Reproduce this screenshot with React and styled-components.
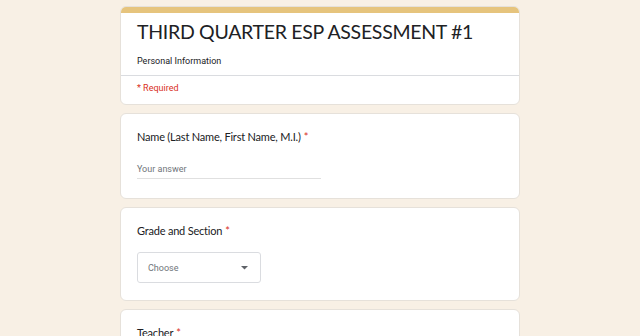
import React from "react";
import styled, { createGlobalStyle } from "styled-components";

const Global = createGlobalStyle`
  html, body { margin: 0; padding: 0; }
  body { background: #f8f0e5; font-family: Roboto, "Noto Sans", sans-serif; }
`;

const Page = styled.div`
  width: 400px;
  margin: 0 auto;
  padding-top: 6px;
  display: flex;
  flex-direction: column;
  gap: 8px;
`;

const Card = styled.section`
  background: #fff;
  border: 1px solid #e6e1da;
  border-radius: 6px;
  overflow: hidden;
  box-sizing: border-box;
`;

const TopBar = styled.div`
  height: 6px;
  background: #e6c47d;
`;

const Head = styled.div`
  padding: 6px 16px 8px;
`;

const Title = styled.h1`
  margin: 0;
  font-family: Lato, "Open Sans", sans-serif;
  font-weight: 400;
  font-size: 19.5px;
  letter-spacing: -0.3px;
  line-height: 26px;
  color: #202124;
  white-space: nowrap;
`;

const Desc = styled.div`
  margin-top: 10px;
  font-size: 9px;
  line-height: 12px;
  color: #202124;
`;

const Divider = styled.div`
  height: 1px;
  background: #dadce0;
`;

const Required = styled.div`
  padding: 6px 16px 10px;
  font-size: 9px;
  line-height: 12px;
  color: #d93025;
`;

const Question = styled.div`
  padding: ${(p) => p.$pad || "15px 16px 18px"};
`;

const Label = styled.div`
  font-family: Lato, "Open Sans", sans-serif;
  font-size: 11px;
  letter-spacing: -0.2px;
  line-height: 15px;
  color: #202124;
`;

const Star = styled.span`
  color: #d93025;
  margin-left: 3px;
`;

const TextInput = styled.div`
  margin-top: 19px;
  width: 184px;
  padding-bottom: 3px;
  border-bottom: 1px solid #e0e0e0;
  font-size: 9px;
  line-height: 12px;
  color: #70757a;
`;

const Select = styled.div`
  margin-top: 14px;
  width: 124px;
  height: 31px;
  box-sizing: border-box;
  border: 1px solid #dadce0;
  border-radius: 3px;
  display: flex;
  align-items: center;
  justify-content: space-between;
  padding: 0 12px 0 10px;
  font-size: 9px;
  color: #70757a;
`;

const Caret = () => (
  <svg width="7" height="4" viewBox="0 0 7 4">
    <path d="M0 0 L7 0 L3.5 3.5 Z" fill="#5f6368" />
  </svg>
);

export default function App() {
  return (
    <>
      <Global />
      <Page>
        <Card>
          <TopBar />
          <Head>
            <Title>THIRD QUARTER ESP ASSESSMENT #1</Title>
            <Desc>Personal Information</Desc>
          </Head>
          <Divider />
          <Required>* Required</Required>
        </Card>
        <Card>
          <Question $pad="15px 16px 19px">
            <Label>
              Name (Last Name, First Name, M.I.)<Star>*</Star>
            </Label>
            <TextInput>Your answer</TextInput>
          </Question>
        </Card>
        <Card>
          <Question $pad="15px 16px 17px">
            <Label>
              Grade and Section<Star>*</Star>
            </Label>
            <Select>
              <span>Choose</span>
              <Caret />
            </Select>
          </Question>
        </Card>
        <Card>
          <Question>
            <Label>
              Teacher<Star>*</Star>
            </Label>
          </Question>
        </Card>
      </Page>
    </>
  );
}
